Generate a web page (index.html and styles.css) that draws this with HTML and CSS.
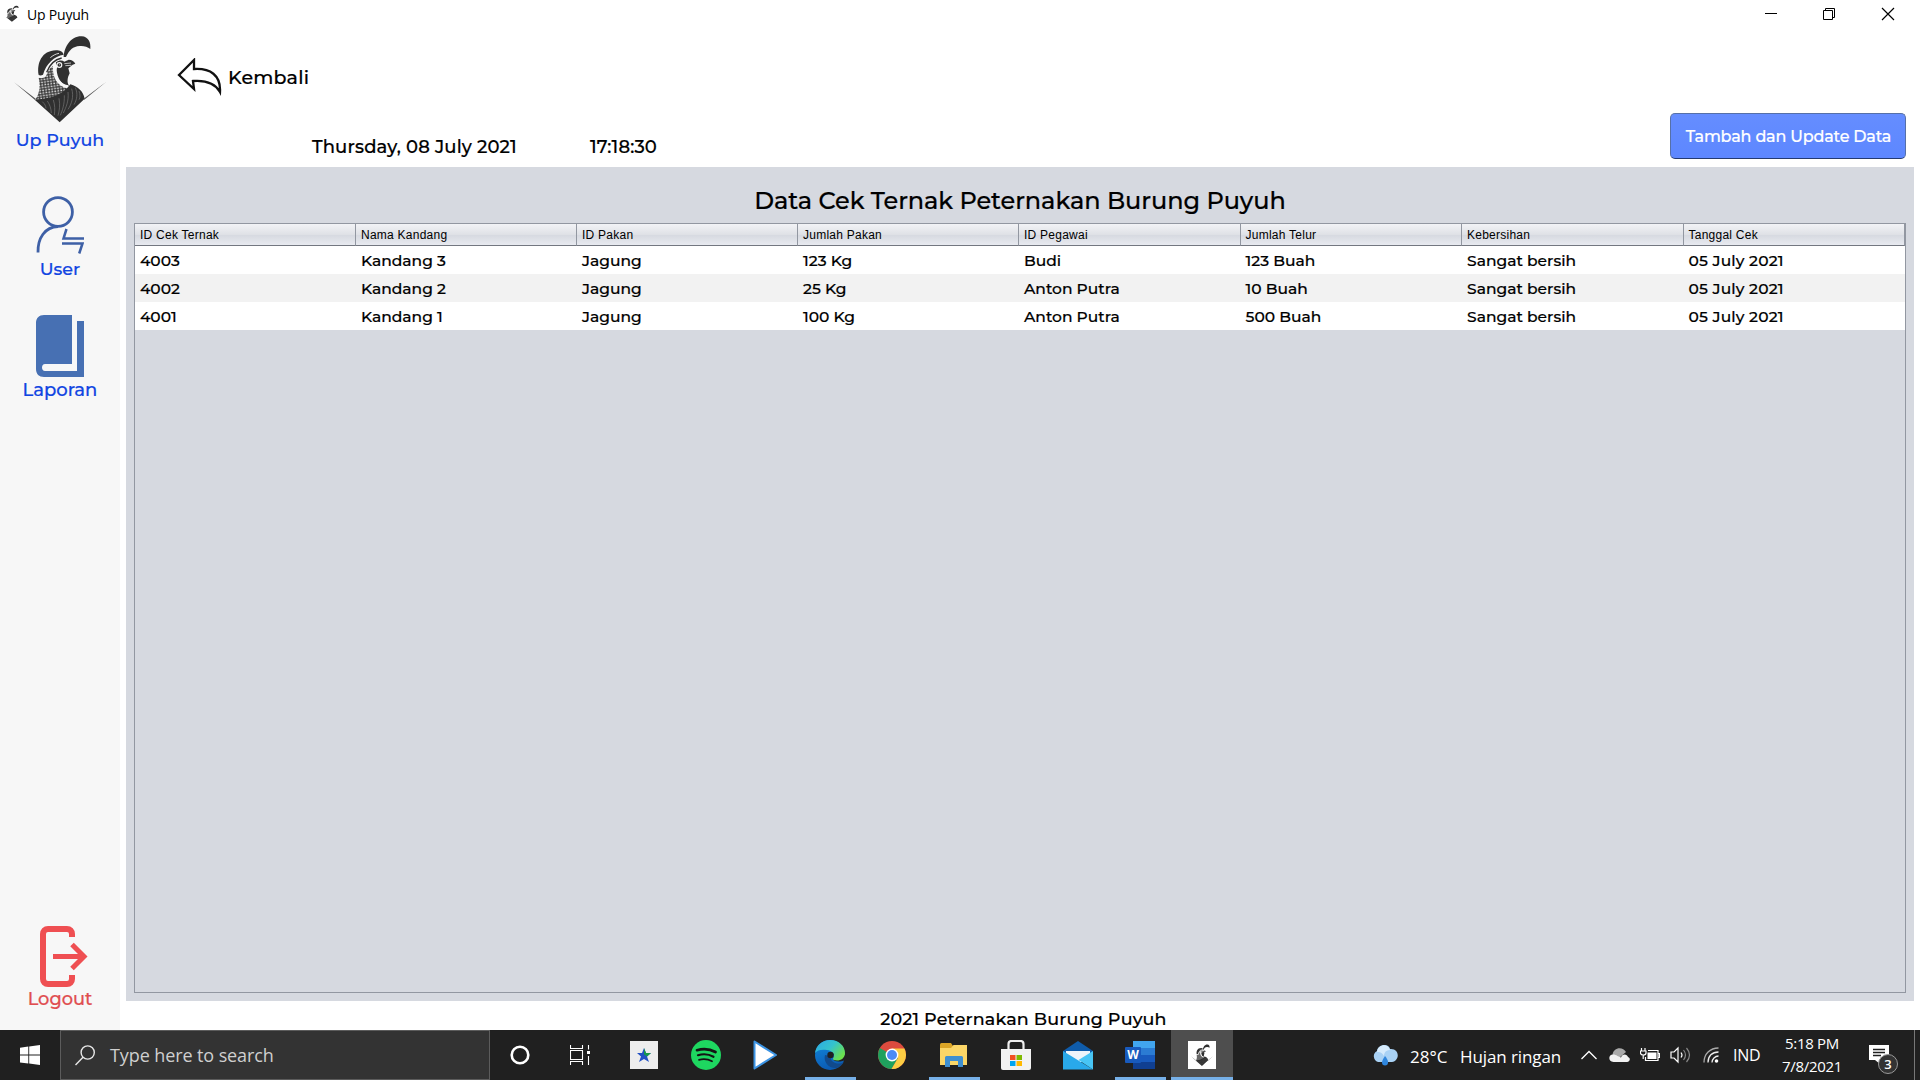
FILE: index.html
```html
<!DOCTYPE html>
<html lang="id">
<head>
<meta charset="utf-8">
<title>Up Puyuh</title>
<link rel="stylesheet" href="styles.css">
</head>
<body>
<svg class="defs" width="0" height="0" aria-hidden="true">
  <defs>
    <pattern id="scales" width="9" height="8" patternUnits="userSpaceOnUse" patternTransform="rotate(-8)">
      <rect width="9" height="8" fill="#303030"/>
      <path d="M1 1.500h5.500v4.500H1z" fill="#e4e4e4"/>
    </pattern>
    <symbol id="quail" viewBox="39 96 288 270">
      <path fill="#303030" d="M194 168C196 136 216 105 248 106c20 1 28 18 26 38-9-7-19-10-32-9-20 1-32 13-41 33z"/>
      <path fill="#303030" d="M119 222c-6-35 9-73 52-74 12 0 20 3 23 13-29 5-52 26-62 60-5 3-9 3-13 1z"/>
      <path fill="none" stroke="#f7f7f7" stroke-width="2.500" d="M154 170c7-6 15-11 26-13"/>
      <path fill="url(#scales)" d="M119 230c8 2 15 0 21-3 6-15 12-26 22-32-2 34 12 62 46 68 4 1 7-3 10-5 2 11-9 25-31 38H109c15-22 14-44 10-66z"/>
      <path fill="none" stroke="#303030" stroke-width="4" d="M143 214c8-22 22-38 45-43"/>
      <path fill="#303030" d="M171 184c10-7 19-6 25-2l13-6c10 0 17 5 20 12l-8 3-13 11 4 15c-7 13-9 28-2 37-17-1-32-16-36-39-2-11 0-17 3-21-5-1-7-5-6-10z"/>
      <path fill="none" stroke="#f7f7f7" stroke-width="7" d="M168 194c-5 32 10 58 39 62"/>
      <circle cx="181" cy="192" r="9" fill="#f7f7f7"/><circle cx="181" cy="192" r="5.500" fill="#303030"/><circle cx="182" cy="191" r="1.500" fill="#fff"/>
      <path fill="none" stroke="#d8d8d8" stroke-width="2.500" d="M196 188l20-2M199 194l18-1"/>
      <path fill="#303030" d="M107 296c34-3 78-6 107-46 24 7 39 22 43 43l-75 71z"/>
      <path fill="none" stroke="#777" stroke-width="2" d="M130 302c8 8 10 12 11 20M145 300c8 12 11 22 12 36M163 297c5 16 5 29 3 45M180 292c4 20 1 38-3 52M196 283c1 26-6 46-12 60M207 273c3 27-6 46-14 63M218 263c7 24 0 46-11 62M229 260c8 18 5 36-4 51M240 270c4 12 4 19 0 26"/>
      <path fill="#555" d="M45 244l66 50-3 3zM322 242l-68 51 2 3z"/>
    </symbol>
  </defs>
</svg>

<header class="titlebar">
  <svg class="titlebar-icon" width="13" height="17" viewBox="100 96 180 270" preserveAspectRatio="none"><use href="#quail" x="39" y="96" width="288" height="270"/></svg>
  <span class="titlebar-name">Up Puyuh</span>
  <svg class="titlebar-controls" width="144" height="28" viewBox="0 0 144 28" fill="none" stroke="#000" stroke-width="1">
    <path d="M13 13.500h12M71.500 10.500h9v9h-9zM73.500 10.500v-2h9v9h-2"/>
    <path stroke-width="1.200" d="M130 8l12 12M142 8l-12 12"/>
  </svg>
</header>

<div class="app">
  <nav class="sidebar">
    <a class="nav-item brand">
      <svg width="96" height="90"><use href="#quail"/></svg>
      <span>Up Puyuh</span>
    </a>
    <a class="nav-item user">
      <svg width="48" height="58" viewBox="0 0 48 58" fill="none" stroke="#3e60a6" stroke-width="2.800">
        <circle cx="22" cy="16" r="14.400"/>
        <path d="M22 30.500C9 31 1.600 42 2 56.500"/>
        <path stroke-width="2.500" d="M30.500 33l-3 9.500H48M26 47.500h20.500l-3.300 10"/>
      </svg>
      <span>User</span>
    </a>
    <a class="nav-item report">
      <svg width="48" height="62" viewBox="0 0 48 62" fill="#4770b3">
        <path d="M8 0h28v49H9c-4 0-4 7 0 7h32V6h7v56H8c-5 0-8-3-8-8V8c0-5 3-8 8-8z"/>
      </svg>
      <span>Laporan</span>
    </a>
    <a class="nav-item logout">
      <svg width="48" height="61" viewBox="0 0 48 61" fill="none" stroke="#ef4f52">
        <path stroke-width="6" d="M32 11V8c0-3-2-5-5-5H8C5 3 3 5 3 8v45c0 3 2 5 5 5h19c3 0 5-2 5-5v-4"/>
        <path stroke-width="5" d="M13 30.500h30M32 18.500l12 12-12 12"/>
      </svg>
      <span>Logout</span>
    </a>
  </nav>

  <main class="content">
    <div class="topbar">
      <a class="back">
        <svg width="46" height="38" viewBox="0 0 46 38" fill="#fff" stroke="#111" stroke-width="2.300" stroke-linejoin="miter">
          <path d="M2 17L17 2v9c16-1 27 6 26 23-5-9-14-12-27-11l1 8z"/>
        </svg>
        <span>Kembali</span>
      </a>
      <div class="toolbar">
        <span class="date">Thursday, 08 July 2021</span>
        <span class="time">17:18:30</span>
        <button class="primary">Tambah dan Update Data</button>
      </div>
    </div>
    <section class="panel">
      <h1>Data Cek Ternak Peternakan Burung Puyuh</h1>
      <div class="scrollpane">
        <table>
          <thead><tr><th>ID Cek Ternak</th><th>Nama Kandang</th><th>ID Pakan</th><th>Jumlah Pakan</th><th>ID Pegawai</th><th>Jumlah Telur</th><th>Kebersihan</th><th>Tanggal Cek</th></tr></thead>
          <tbody>
            <tr><td>4003</td><td>Kandang 3</td><td>Jagung</td><td>123 Kg</td><td>Budi</td><td>123 Buah</td><td>Sangat bersih</td><td>05 July 2021</td></tr>
            <tr><td>4002</td><td>Kandang 2</td><td>Jagung</td><td>25 Kg</td><td>Anton Putra</td><td>10 Buah</td><td>Sangat bersih</td><td>05 July 2021</td></tr>
            <tr><td>4001</td><td>Kandang 1</td><td>Jagung</td><td>100 Kg</td><td>Anton Putra</td><td>500 Buah</td><td>Sangat bersih</td><td>05 July 2021</td></tr>
          </tbody>
        </table>
      </div>
    </section>
    <footer>2021 Peternakan Burung Puyuh</footer>
  </main>
</div>

<div class="taskbar">
  <div class="start">
    <svg width="20" height="20" viewBox="0 0 20 20" fill="#fff"><path d="M0 2.700l8.300-1.200v8H0zM9.200 1.400L20 0v9.500H9.200zM0 10.400h8.300v8.100L0 17.400zM9.200 10.400H20V20L9.200 18.600z"/></svg>
  </div>
  <div class="search">
    <svg width="20" height="21" viewBox="0 0 20 21" fill="none" stroke="#e8e8e8" stroke-width="1.400"><circle cx="12.700" cy="7.500" r="6.600"/><path d="M8 12.200L.5 20"/></svg>
    <span>Type here to search</span>
  </div>
  <div class="system-slot"><svg width="20" height="20" viewBox="0 0 20 20"><circle cx="10" cy="10" r="8.300" fill="none" stroke="#fff" stroke-width="2.600"/></svg></div>
  <div class="system-slot"><svg width="20" height="20" viewBox="0 0 20 20" fill="none" stroke="#fff" stroke-width="1.100"><path d="M.5 0v3.500h12V0M.5 20v-3.500h12V20M.5 5.500h12v9H.5zM18.500 0v4.500M18.500 11v9"/><path fill="#fff" stroke="none" d="M17 6h3v3h-3z"/></svg></div>
  <div class="apps">
    <div class="slot"><svg width="28" height="28" viewBox="0 0 28 28"><path fill="#ededed" d="M0 0h28v28H0z"/><path fill="#2251c4" d="M7 12h5l2-5 2 5h5l-4 3.500 2 5.500-5-3-5 3 2-5.500z"/><path fill="#16994a" d="M14 7l2 5h5l-4 3.500-3-2z"/></svg></div>
    <div class="slot"><svg width="30" height="30" viewBox="0 0 30 30"><circle cx="15" cy="15" r="15" fill="#1ed760"/><path fill="none" stroke="#141414" stroke-linecap="round" stroke-width="2.700" d="M6 10.200c6-1.800 13-1.200 18.500 1.800"/><path fill="none" stroke="#141414" stroke-linecap="round" stroke-width="2.200" d="M7 15.200c5-1.500 11-1 15.500 1.600"/><path fill="none" stroke="#141414" stroke-linecap="round" stroke-width="1.800" d="M8 19.800c4-1 9-.8 13 1.500"/></svg></div>
    <div class="slot play"><svg width="24" height="30" viewBox="0 0 24 30"><path fill="#fff" stroke="#3c94e4" stroke-width="2" stroke-linejoin="round" d="M1.500 1.500L23 15 1.500 28.500z"/></svg></div>
    <div class="slot open"><svg width="30" height="30" viewBox="0 0 30 30">
      <defs><linearGradient id="edge-a" x2="1" y2=".6"><stop stop-color="#2ba8e8"/><stop offset=".55" stop-color="#35c3cc"/><stop offset="1" stop-color="#6be04d"/></linearGradient><linearGradient id="edge-b" y2="1" x2=".3"><stop stop-color="#1289dd"/><stop offset="1" stop-color="#0b5cb4"/></linearGradient></defs>
      <circle cx="15" cy="15" r="15" fill="url(#edge-b)"/>
      <path fill="#114a8c" d="M10 15c-2 7 4 14 12 13 3-1 5-3 7-6-5 3-13 2-14-6z"/>
      <path fill="#202020" d="M15.500 13c3 0 5 3 2.500 6 1 3 8 3 10.500 1.500l3 3V15h-8z"/>
      <path fill="url(#edge-a)" d="M0 13C1 5 8 0 15 0c9 0 15 6 15 13 0 5-4 7.500-8 7.500-3 0-4.500-1-4-2 3-4-1-8-6-8.500C7 9 2 10 0 13z"/>
      <circle cx="15.500" cy="15" r="3.200" fill="#202020"/></svg></div>
    <div class="slot"><svg width="28" height="28" viewBox="0 0 28 28"><circle cx="14" cy="14" r="14" fill="#dc4b3e"/><path fill="#1fa15d" d="M14 14L1.900 7A14 14 0 0 0 13.500 28l6.500-11z"/><path fill="#fccd43" d="M14 7.500h12.400A14 14 0 0 1 13.500 28L20 17z"/><circle cx="14" cy="14" r="6.400" fill="#fff"/><circle cx="14" cy="14" r="5" fill="#4c8bf5"/></svg></div>
    <div class="slot open"><svg width="28" height="24" viewBox="0 0 28 24"><path fill="#dba526" d="M0 1.500Q0 0 1.500 0H11l2 3v3H0z"/><path fill="#fbd667" d="M0 5h11l2.500-3H27v20H0z"/><path fill="#3f8fd0" d="M5 24V14.500Q5 13 6.500 13h15q1.500 0 1.500 1.500V24h-5v-6h-8v6z"/></svg></div>
    <div class="slot"><svg width="30" height="31" viewBox="0 0 30 31"><path fill="none" stroke="#eee" stroke-width="2.200" d="M7.500 12V4q0-3 3-3h9q3 0 3 3v8"/><path fill="#f2f2f2" d="M0 9h30v19q0 2-2 2H2q-2 0-2-2z"/><path fill="#f25022" d="M9 15h5.500v5H9z"/><path fill="#7fba00" d="M15.500 15H21v5h-5.500z"/><path fill="#00a4ef" d="M9 21h5.500v5H9z"/><path fill="#ffb900" d="M15.500 21H21v5h-5.500z"/></svg></div>
    <div class="slot"><svg width="30" height="29" viewBox="0 0 30 29"><path fill="#0f5cab" d="M0 10L15 0l15 10v8H0z"/><path fill="#eef4fa" d="M3 10h24v9L15 22 3 19z"/><path fill="#29a9ea" d="M0 10l30 18.500H0z"/><path fill="#48c5f5" d="M30 10v18.500L15.500 19z"/></svg></div>
    <div class="slot open"><svg width="30" height="28" viewBox="0 0 30 28"><path fill="#41a5ee" d="M8 0h22v7H8z"/><path fill="#2b7cd3" d="M8 7h22v7H8z"/><path fill="#185abd" d="M8 14h22v7H8z"/><path fill="#103f91" d="M8 21h22v7H8z"/><rect y="6" width="16" height="16" rx="1" fill="#185abd"/><text class="word-letter" x="8" y="18.200" text-anchor="middle" fill="#fff">W</text></svg></div>
    <div class="slot open active"><svg width="28" height="28" viewBox="0 0 28 28"><path fill="#fff" d="M0 0h28v28H0z"/><use href="#quail" x="2" y="2.500" width="24" height="23"/></svg></div>
  </div>
  <div class="tray">
    <svg class="weather" width="26" height="22" viewBox="0 0 26 22"><path fill="#a9d2f5" d="M6 18a6 6 0 0 1-1-11C6 0 17-1 18 5c10-1 10 12 2 13z"/><path fill="#d6ebfc" d="M5 8c1-8 11-9 13-2-5 0-6 4-6 6-2-4-5-4-7-4z"/><path fill="#2f86dd" d="M13 12c3 4 3 5 3 6.500a3 3 0 0 1-6 0C10 17 11 15 13 12z"/></svg>
    <span class="temp">28°C</span>
    <span class="condition">Hujan ringan</span>
    <svg class="chevron" width="16" height="10" viewBox="0 0 16 10" fill="none" stroke="#fff" stroke-width="1.300"><path d="M.5 9L8 1.500 15.500 9"/></svg>
    <svg class="cloud" width="21" height="14" viewBox="0 0 21 14"><path fill="#aaa" d="M3.500 7C4-1 14-2 17 4l-7 6z"/><path fill="#f2f2f2" d="M4.500 14C-1 14-1 6.500 4 6.500c2 0 3 .5 4.500 1.500l3.500 1.500c1-4 6-4 7-.5 3 1 2 5-1 5z"/></svg>
    <svg class="battery" width="20" height="14" viewBox="0 0 20 14" fill="none" stroke="#fff" stroke-width="1.200"><path d="M8 2.500h10v10H5.500V9M18.500 5.500h1v4h-1M1.500 0v3M5 0v3M.500 3h5.500v2q0 2-2.700 2T.500 5zM3.200 7v4"/><path fill="#fff" stroke="none" d="M7.500 4.500h9v6.500h-9z"/></svg>
    <svg class="volume" width="21" height="18" viewBox="0 0 21 18" fill="none" stroke="#fff" stroke-width="1.200"><path d="M1 6h3l4-4v14l-4-4H1zM11 6.500q2 2.500 0 5"/><path stroke="#888" d="M13.500 4q4 5 0 10M16.500 2q6 7 0 14"/></svg>
    <svg class="wifi" width="16" height="16" viewBox="0 0 16 16" fill="none"><path stroke="#aaa" stroke-width="1.300" d="M1 15.500C1 7 7 1 15.500 1"/><path stroke="#eee" stroke-width="1.300" d="M5 15.500C5 9 9 5 15.500 5M9 15.500C9 12 12 9 15.500 9"/><circle cx="13.500" cy="14" r="1.800" fill="#fff"/></svg>
    <span class="lang">IND</span>
    <div class="clock"><span>5:18 PM</span><span>7/8/2021</span></div>
    <div class="notify">
      <svg width="20" height="20" viewBox="0 0 20 20"><path fill="#fff" d="M0 0h20v15h-9v4l-5-4H0z"/><path stroke="#202020" stroke-width="1.400" d="M4 4.500h12M4 7.500h12M4 10.500h8"/></svg>
      <span class="badge">3</span>
    </div>
  </div>
</div>
</body>
</html>
```
FILE: styles.css
```css
* { box-sizing: border-box; }
body {
  margin: 0;
  width: 1920px;
  height: 1080px;
  overflow: hidden;
  display: flex;
  flex-direction: column;
  background: #fff;
  color: #000;
  font-family: "Montserrat", "Inter", sans-serif;
  font-weight: 500;
  font-size: 18px;
}
svg { display: block; flex: none; }
span { white-space: nowrap; }
.defs { position: absolute; }

.titlebar { height: 29px; display: flex; align-items: flex-start; padding-left: 6px; }
.titlebar-icon { margin: 5px 8px 0 0; }
.titlebar-name { font: 400 14px/20px "Segoe UI", "Open Sans", sans-serif; letter-spacing: -.2px; margin-top: 5px; }
.titlebar-controls { margin: 0 24px 0 auto; }

.app { height: 1001px; display: flex; -webkit-text-stroke: .2px currentColor; }
.sidebar { width: 120px; background: #f7f7f7; display: flex; flex-direction: column; }
.nav-item { display: flex; flex-direction: column; align-items: center; color: #1145e2; font-size: 17.5px; line-height: 20px; }
.brand { padding: 4px 0 0; gap: 7px; }
.user { margin-top: 46px; gap: 5px; }
.report { margin-top: 36px; gap: 3px; font-size: 18px; }
.logout { margin: auto 0 21px; gap: 2px; color: #e04e50; font-size: 17.800px; }
.logout svg { margin-left: 8px; }

.content { width: 1800px; padding: 0 6px; display: flex; flex-direction: column; }
.topbar { height: 138px; display: flex; flex-direction: column; justify-content: space-between; }
.back { display: flex; align-items: center; gap: 5px; padding: 29px 0 0 51px; font-size: 19px; letter-spacing: .2px; line-height: 20px; }
.back span { padding-top: 2px; }
.toolbar { display: flex; padding: 0 8px 8px 186px; }
.toolbar > span { line-height: 20px; margin-top: 24px; letter-spacing: .15px; }
.date { width: 278px; }
.primary {
  margin-left: auto;
  width: 236px;
  height: 46px;
  padding: 2px 0 0 1px;
  border: 1px solid #5670a8;
  border-bottom-color: #243a70;
  border-radius: 5px;
  background: linear-gradient(#658dff, #5d87ff);
  color: #fff;
  font: 500 16px/20px "Montserrat", "Inter", sans-serif;
  letter-spacing: -.2px;
}

.panel { height: 834px; background: #d6d9e0; padding: 18px 8px 8px; display: flex; flex-direction: column; }
h1 { margin: 0; height: 38px; text-align: center; font-size: 24px; font-weight: 500; line-height: 32px; letter-spacing: -.05px; }
.scrollpane { flex: 1; border: 1px solid #9297a1; }
table { width: 100%; table-layout: fixed; border-collapse: separate; border-spacing: 0; }
th {
  height: 22px;
  padding: 0 5px;
  text-align: left;
  font: 400 12px/18px Arial, "Liberation Sans", sans-serif;
  letter-spacing: .25px;
  -webkit-text-stroke: 0;
  background: linear-gradient(#f2f3f6, #dfe1e6 50%, #d6d9e0 52%, #e8eaf0);
  border-right: 1px solid #9297a1;
  border-bottom: 1px solid #737780;
}
th:nth-child(-n+4) { width: 221px; }
td { height: 28px; padding: 1px 5px 0; font-size: 15.5px; line-height: 20px; background: #fff; white-space: nowrap; }
td:last-child { letter-spacing: .2px; }
tr:nth-child(2) td { background: #f2f2f2; }
footer { text-align: center; line-height: 20px; padding: 8px 0 0 7px; font-size: 17.5px; letter-spacing: .17px; }

.taskbar { height: 50px; background: #202020; color: #fff; display: flex; font: 400 17px/24px "Segoe UI", "Open Sans", sans-serif; }
.start { width: 60px; display: flex; align-items: center; justify-content: center; }
.search { width: 430px; background: #333; border: 1px solid #5c5c5c; display: flex; align-items: center; padding-left: 14px; gap: 15px; color: #cfcfcf; font-size: 18px; letter-spacing: -.1px; }
.system-slot { width: 60px; display: flex; align-items: center; justify-content: center; }
.apps { margin-left: 3px; display: flex; }
.slot { width: 62px; display: flex; align-items: center; justify-content: center; }
.play { padding-right: 7px; }
.word-letter { font: 700 12px "Open Sans", sans-serif; }
.open { background: linear-gradient(#76b0e8, #76b0e8) 50% 100% / 51px 3px no-repeat; }
.active { background-color: #4e4e4e; background-size: 100% 3px; }
.tray { margin-left: 139px; display: flex; align-items: center; }
.temp { margin-left: 12px; width: 50px; padding-top: 3px; }
.condition { width: 121px; padding-top: 3px; letter-spacing: -.1px; }
.chevron { margin-right: 12px; }
.cloud { margin-right: 10px; }
.battery { margin-right: 10px; }
.volume { margin-right: 12px; }
.wifi { margin-right: 14px; }
.lang { width: 39px; font-size: 16px; letter-spacing: -.3px; }
.clock { width: 80px; margin-right: 11px; display: flex; flex-direction: column; align-items: center; font-size: 15px; letter-spacing: -.3px; line-height: 23px; }
.notify { position: relative; width: 52px; height: 50px; padding: 15px 0 0 6px; border-right: 1px solid #777; }
.badge { position: absolute; left: 15px; top: 24px; width: 20px; height: 20px; border: 1px solid #999; border-radius: 50%; background: #333; font-size: 13px; font-weight: 600; line-height: 18px; text-align: center; }
```
